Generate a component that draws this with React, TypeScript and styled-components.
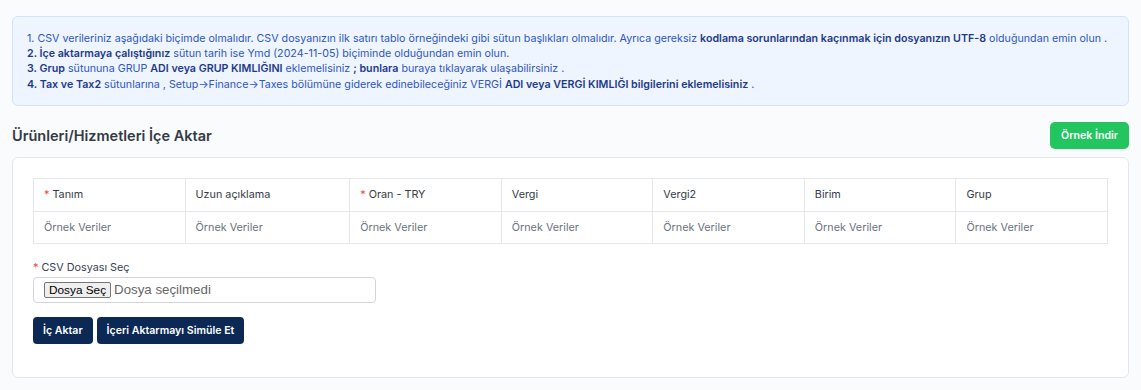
import React from 'react';
import styled, { createGlobalStyle } from 'styled-components';

const GlobalStyle = createGlobalStyle`
  body {
    margin: 0;
    background: #fafbfc;
    font-family: Inter, 'Noto Sans', sans-serif;
    color: #374151;
  }
  * { box-sizing: border-box; }
`;

const Page = styled.div`
  padding: 16px 12px 12px 12px;
`;

const InfoBox = styled.div`
  background: #eef5ff;
  border: 1px solid #d3e3fb;
  border-radius: 6px;
  padding: 14px 14px 13px 14px;
  color: #2f56c2;
  font-size: 10.7px;
  line-height: 15.2px;
`;

const InfoLine = styled.div`
  white-space: nowrap;
`;

const B = styled.span`
  color: #1e3a8a;
  font-weight: 600;
`;

const TitleRow = styled.div`
  display: flex;
  align-items: center;
  justify-content: space-between;
  margin: 16px 0 8px 0;
`;

const Title = styled.h4`
  margin: 0;
  font-size: 14.5px;
  font-weight: 600;
  color: #333a44;
`;

const GreenButton = styled.button`
  background: #22c55e;
  color: #fff;
  border: 0;
  border-radius: 5px;
  height: 27px;
  padding: 0 11px;
  font-family: inherit;
  font-size: 10.6px;
  font-weight: 600;
`;

const Card = styled.div`
  background: #fff;
  border: 1px solid #e3e6ea;
  border-radius: 6px;
  padding: 20px 20px 33px 20px;
`;

const Table = styled.table`
  width: 100%;
  border-collapse: collapse;
  font-size: 10.8px;
`;

const Th = styled.th`
  border: 1px solid #e5e7eb;
  text-align: left;
  font-weight: 400;
  color: #353c47;
  padding: 0 10px;
  height: 33px;
`;

const Td = styled.td`
  border: 1px solid #e5e7eb;
  color: #6b7280;
  padding: 0 10px;
  height: 32px;
`;

const Star = styled.span`
  color: #ef4444;
  margin-right: 3px;
`;

const Label = styled.div`
  margin-top: 17px;
  font-size: 10.8px;
  color: #374151;
`;

const FileBox = styled.label`
  display: flex;
  align-items: center;
  margin-top: 3px;
  width: 343px;
  height: 26px;
  border: 1px solid #d1d5db;
  border-radius: 4px;
  padding: 0 10px;
  font-family: 'Liberation Sans', Arial, sans-serif;
  font-size: 13.3px;
  color: #666;
`;

const FileButton = styled.span`
  display: inline-block;
  background: #efefef;
  border: 1px solid #767676;
  border-radius: 2px;
  color: #000;
  font-size: 11.8px;
  line-height: 14px;
  padding: 0 4px;
  margin-right: 3px;
`;

const HiddenInput = styled.input`
  display: none;
`;

const Actions = styled.div`
  display: flex;
  gap: 4px;
  margin-top: 14px;
`;

const NavyButton = styled.button`
  background: #0b2954;
  color: #fff;
  border: 0;
  border-radius: 4px;
  height: 27px;
  padding: 0 10px;
  font-family: inherit;
  font-size: 10.6px;
  font-weight: 600;
`;

const columns = [
  { name: 'Tanım', required: true },
  { name: 'Uzun açıklama' },
  { name: 'Oran - TRY', required: true },
  { name: 'Vergi' },
  { name: 'Vergi2' },
  { name: 'Birim' },
  { name: 'Grup' },
];

export default function App() {
  return (
    <>
      <GlobalStyle />
      <Page>
        <InfoBox>
          <InfoLine>
            1. CSV verileriniz aşağıdaki biçimde olmalıdır. CSV dosyanızın ilk satırı tablo örneğindeki gibi sütun
            başlıkları olmalıdır. Ayrıca gereksiz <B>kodlama sorunlarından kaçınmak için dosyanızın UTF-8</B> olduğundan
            emin olun .
          </InfoLine>
          <InfoLine>
            <B>2. İçe aktarmaya çalıştığınız</B> sütun tarih ise Ymd (2024-11-05) biçiminde olduğundan emin olun.
          </InfoLine>
          <InfoLine>
            <B>3. Grup</B> sütununa GRUP <B>ADI veya GRUP KIMLIĞINI</B> eklemelisiniz <B>; bunlara</B> buraya tıklayarak
            ulaşabilirsiniz .
          </InfoLine>
          <InfoLine>
            <B>4. Tax ve Tax2</B> sütunlarına , Setup→Finance→Taxes bölümüne giderek edinebileceğiniz VERGİ{' '}
            <B>ADI veya VERGİ KIMLIĞI bilgilerini eklemelisiniz</B> .
          </InfoLine>
        </InfoBox>

        <TitleRow>
          <Title>Ürünleri/Hizmetleri İçe Aktar</Title>
          <GreenButton>Örnek İndir</GreenButton>
        </TitleRow>

        <Card>
          <Table>
            <thead>
              <tr>
                {columns.map((c) => (
                  <Th key={c.name}>
                    {c.required && <Star>*</Star>}
                    {c.name}
                  </Th>
                ))}
              </tr>
            </thead>
            <tbody>
              <tr>
                {columns.map((c) => (
                  <Td key={c.name}>Örnek Veriler</Td>
                ))}
              </tr>
            </tbody>
          </Table>

          <Label>
            <Star>*</Star>CSV Dosyası Seç
          </Label>
          <FileBox>
            <HiddenInput type="file" />
            <FileButton>Dosya Seç</FileButton>
            Dosya seçilmedi
          </FileBox>

          <Actions>
            <NavyButton>İç Aktar</NavyButton>
            <NavyButton>İçeri Aktarmayı Simüle Et</NavyButton>
          </Actions>
        </Card>
      </Page>
    </>
  );
}
